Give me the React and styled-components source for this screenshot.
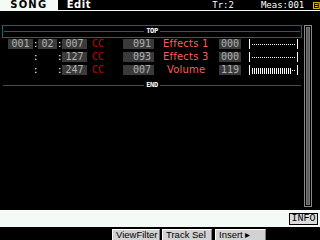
import React from 'react'
import styled, { createGlobalStyle } from 'styled-components'

const GlobalStyle = createGlobalStyle`
    html, body {
        margin: 0;
        padding: 0;
        background: #000;
    }
    body {
        width: 320px;
        height: 240px;
        overflow: hidden;
    }
`

const Screen = styled.div`
    width: 320px;
    height: 240px;
    background: #000;
    display: flex;
    flex-direction: column;
    font-family: "DejaVu Sans Mono", monospace;
    color: #fff;
`

const Header = styled.div`
    height: 10px;
    border-bottom: 1px solid #f4faf6;
    display: flex;
    align-items: center;
`

const Tab = styled.div`
    width: 60px;
    height: 10px;
    background: #f4faf6;
    color: #000;
    font-family: "DejaVu Sans", sans-serif;
    font-weight: bold;
    font-size: 10px;
    line-height: 10px;
    letter-spacing: 1.2px;
    text-align: center;
`

const Title = styled.div`
    margin-left: 9px;
    font-family: "DejaVu Sans", sans-serif;
    font-weight: bold;
    font-size: 10px;
    line-height: 10px;
    letter-spacing: 0.6px;
`

const Status = styled.div`
    margin-left: ${p => p.$ml}px;
    font-size: 9px;
    line-height: 10px;
`

const MenuIcon = styled.svg`
    margin-left: 9px;
    display: block;
`

const Body = styled.div`
    height: 182px;
    padding: 14px 0 3px 2px;
    display: flex;
    gap: 2px;
`

const List = styled.div`
    width: 300px;
    display: flex;
    flex-direction: column;
`

const Marker = styled.div`
    height: ${p => p.$framed ? 11 : 13}px;
    border: ${p => p.$framed ? '1px solid #0a6e6e' : 'none'};
    display: flex;
    align-items: center;
    gap: 2px;
    padding: 0 1px;
    margin-top: ${p => p.$framed ? 0 : 2}px;

    &::before, &::after {
        content: '';
        flex: 1;
        height: 1px;
        background: #4c4c4c;
    }
`

const MarkerText = styled.span`
    font-size: 7px;
    font-weight: bold;
    line-height: 7px;
    letter-spacing: -0.4px;
`

const Row = styled.div`
    height: 13px;
    display: grid;
    grid-template-columns: 25px 5px 19px 5px 25px 36px 31px 65px 22px 8px 49px;
    align-items: start;
    padding-left: 6px;
    padding-top: 1px;
    box-sizing: border-box;
`

const Box = styled.div`
    height: 10px;
    background: ${p => p.$empty ? 'transparent' : '#3a3a3a'};
    color: #b0b0b0;
    font-size: 10px;
    line-height: 10px;
    text-align: ${p => p.$align || 'center'};
    padding-right: ${p => p.$align === 'right' ? 3 : 0}px;
`

const Colon = styled.div`
    color: #fff;
    font-size: 9px;
    line-height: 10px;
    text-align: center;
`

const Kind = styled.div`
    color: #c40000;
    font-size: 10px;
    line-height: 10px;
    padding-left: 5px;
`

const Label = styled.div`
    color: #ff5c5c;
    font-family: "DejaVu Sans", sans-serif;
    font-size: 10px;
    line-height: 10px;
    letter-spacing: 0.2px;
    padding-left: ${p => p.$indent}px;
`

const Gauge = styled.div`
    height: 10px;
    border-left: 1px solid #fff;
    border-right: 1px solid #fff;
    box-sizing: border-box;
    display: flex;
    align-items: center;
    padding: 0 2px;
`

const GaugeFill = styled.div`
    height: 6px;
    margin-top: 2px;
    background: repeating-linear-gradient(90deg, #fff 0 1px, transparent 1px 2px);
`

const GaugeRest = styled.div`
    flex: 1;
    height: 1px;
    margin-top: 1px;
    background: repeating-linear-gradient(90deg, #fff 0 1px, transparent 1px 2px);
`

const Scroll = styled.div`
    width: 8px;
    height: 182px;
    box-sizing: border-box;
    border: 1px solid #8a8a8a;
    padding: 1px;
`

const Thumb = styled.div`
    height: 100%;
    box-sizing: border-box;
    background: #5e5e5e;
    border: 1px solid #747474;
`

const InfoBar = styled.div`
    height: 17px;
    background: #f4faf6;
    display: flex;
    align-items: center;
    justify-content: flex-end;
    padding-right: 2px;
`

const InfoButton = styled.div`
    width: 29px;
    height: 12px;
    box-sizing: border-box;
    border: 1px solid #000;
    background: #dcdcdc;
    color: #000;
    font-family: "Liberation Mono", monospace;
    font-size: 10px;
    line-height: 10px;
    text-align: center;
`

const FnBar = styled.div`
    height: 11px;
    margin-top: 2px;
    display: flex;
    padding-left: 112px;
`

const FnButton = styled.div`
    width: ${p => p.$w}px;
    margin-right: ${p => p.$gap || 0}px;
    height: 11px;
    box-sizing: border-box;
    background: #d2d2d2;
    border-top: 1px solid #fff;
    border-left: 1px solid #fff;
    border-right: 1px solid #808080;
    color: #000;
    font-family: "Liberation Sans", sans-serif;
    font-size: 9.5px;
    line-height: 10px;
    padding-left: 3px;
    white-space: nowrap;
    overflow: hidden;
`

const events = [
    { meas: '001', beat: '02', tick: '007', num: '091', name: 'Effects 1', indent: 9, val: 0 },
    { meas: '', beat: '', tick: '127', num: '093', name: 'Effects 3', indent: 9, val: 0 },
    { meas: '', beat: '', tick: '247', num: '007', name: 'Volume', indent: 13, val: 119 },
]

const Bar = ({ val }) => {
    const w = Math.round(val / 127 * 43)
    return <Gauge>
        {w > 0 && <GaugeFill style={{ width: w }} />}
        <GaugeRest />
    </Gauge>
}

const App = () => {
    return <Screen>
        <GlobalStyle />
        <Header>
            <Tab>SONG</Tab>
            <Title>Edit</Title>
            <Status $ml={121}>Tr:2</Status>
            <Status $ml={27}>Meas:001</Status>
            <MenuIcon width="7" height="7" viewBox="0 0 7 7">
                <rect x="0.5" y="0.5" width="6" height="6" fill="none" stroke="#f0d000" />
                <rect x="2" y="2" width="3" height="1" fill="#f0d000" />
                <rect x="2" y="4" width="3" height="1" fill="#f0d000" />
            </MenuIcon>
        </Header>

        <Body>
            <List>
                <Marker $framed><MarkerText>TOP</MarkerText></Marker>
                {events.map((ev, i) => (
                    <Row key={i}>
                        <Box $empty={!ev.meas}>{ev.meas}</Box>
                        <Colon>:</Colon>
                        <Box $empty={!ev.beat}>{ev.beat}</Box>
                        <Colon>:</Colon>
                        <Box>{ev.tick}</Box>
                        <Kind>CC</Kind>
                        <Box $align='right'>{ev.num}</Box>
                        <Label $indent={ev.indent}>{ev.name}</Label>
                        <Box>{String(ev.val).padStart(3, '0')}</Box>
                        <div />
                        <Bar val={ev.val} />
                    </Row>
                ))}
                <Marker><MarkerText>END</MarkerText></Marker>
            </List>
            <Scroll><Thumb /></Scroll>
        </Body>

        <InfoBar>
            <InfoButton>INFO</InfoButton>
        </InfoBar>

        <FnBar>
            <FnButton $w={48} $gap={2}>ViewFilter</FnButton>
            <FnButton $w={50} $gap={3}>Track Sel</FnButton>
            <FnButton $w={51}>Insert ▸</FnButton>
        </FnBar>
    </Screen>
}

export default App
